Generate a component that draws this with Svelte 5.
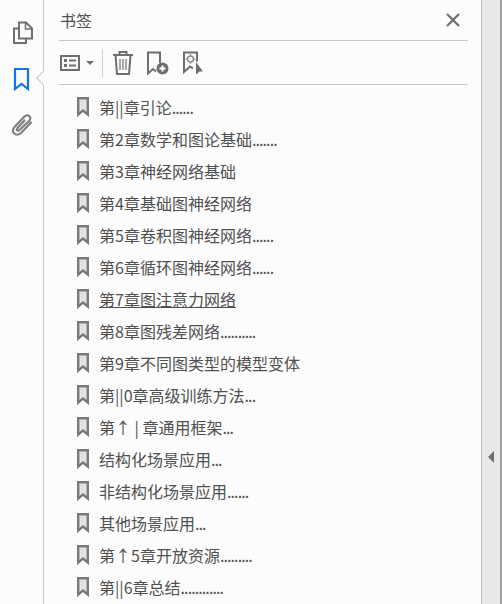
<script>
  let chapters = [
    { title: "第||章引论", dots: "......" },
    { title: "第2章数学和图论基础", dots: "......." },
    { title: "第3章神经网络基础" },
    { title: "第4章基础图神经网络" },
    { title: "第5章卷积图神经网络", dots: "......" },
    { title: "第6章循环图神经网络", dots: "......" },
    { title: "第7章图注意力网络", active: true },
    { title: "第8章图残差网络", dots: ".........." },
    { title: "第9章不同图类型的模型变体" },
    { title: "第||0章高级训练方法", dots: "..." },
    { title: "第↑ | 章通用框架", dots: "..." },
    { title: "结构化场景应用", dots: "..." },
    { title: "非结构化场景应用", dots: "......" },
    { title: "其他场景应用", dots: "..." },
    { title: "第↑5章开放资源", dots: "........." },
    { title: "第||6章总结", dots: "............" }
  ];
</script>

<div class="window">
  <nav class="rail">
    <button class="rail-btn" aria-label="页面">
      <svg width="24" height="24" viewBox="0 0 24 24" fill="none" stroke="#707070" stroke-width="2">
        <path d="M8 7.500H4V22h12v-4" />
        <path d="M9 1.500h7l6 6V17.500H9z" />
        <path d="M15.500 2V8H21.500" stroke-width="1.500" />
      </svg>
    </button>
    <button class="rail-btn selected" aria-label="书签">
      <svg width="24" height="24" viewBox="0 0 24 24" fill="none" stroke="#1473e6" stroke-width="2.200">
        <path d="M5 2h13v20l-6.500-5-6.500 5z" />
      </svg>
    </button>
    <button class="rail-btn" aria-label="附件">
      <svg width="24" height="24" viewBox="0 0 24 24" fill="none" stroke="#808080" stroke-width="2.200" stroke-linecap="round">
        <path d="M21 9.500l-10 10.500c-2 2-5 2-6.800.500s-1.700-4.500.300-6.500L14.500 3.500c1.500-1.500 3.800-1.500 5-.300s1 3.300-.500 4.800L9.500 17c-.8.800-1.800.800-2.300.300s-.5-1.500.300-2.300l7-7.500" />
      </svg>
    </button>
  </nav>

  <section class="panel">
    <header class="title-bar">
      <span class="title">书签</span>
      <svg class="close" width="14" height="14" viewBox="0 0 14 14" stroke="#6e6e6e" stroke-width="2.200">
        <path d="M1 1l12 12M13 1L1 13" />
      </svg>
    </header>

    <div class="toolbar">
      <div class="options">
        <svg width="20" height="18" viewBox="0 0 20 18" fill="none" stroke="#6e6e6e" stroke-width="2">
          <rect x="1" y="2" width="18" height="14" />
          <path d="M4 6.500h3M4 11.500h3" stroke-width="3" />
          <path d="M9 6.500h7M9 11.500h7" stroke-width="2" />
        </svg>
        <span class="caret"></span>
      </div>
      <span class="divider"></span>
      <svg class="tool trash" width="22" height="26" viewBox="0 0 22 26" fill="none" stroke="#6e6e6e" stroke-width="2">
        <path d="M1 5h20M7.500 5V2h7v3" />
        <path d="M3.500 5l1.500 19h12l1.500-19" />
        <path d="M8 9v11M11 9v11M14 9v11" stroke-width="1.500" stroke="#8a8a8a" />
      </svg>
      <svg class="tool add" width="23" height="24" viewBox="0 0 23 24" fill="none">
        <path d="M10 20.500l-3-2.500-5 4.500V1.500h12V12" stroke="#6e6e6e" stroke-width="2" />
        <circle cx="16.500" cy="17.500" r="6" fill="#6e6e6e" />
        <path d="M13.500 17.500h6M16.500 14.500v6" stroke="#fff" stroke-width="2" />
      </svg>
      <svg class="tool mark" width="21" height="24" viewBox="0 0 21 24" fill="none">
        <path d="M11 17.500l-3-2-6 5.500V1.500h13v9" stroke="#6e6e6e" stroke-width="2" />
        <circle cx="8.500" cy="8" r="3" stroke="#8a8a8a" stroke-width="1.500" />
        <path d="M8.500 3v1.500M8.500 11.500V13M3.500 8H5M12 8h1.500" stroke="#8a8a8a" stroke-width="1.200" />
        <path d="M14 11l7 9.500h-3.500l-3.500 3z" fill="#6e6e6e" />
      </svg>
    </div>

    <ul class="bookmarks">
      {#each chapters as chapter}
        <li>
          <svg width="12" height="20" viewBox="0 0 12 20">
            <path d="M1.200 1.200h9.600v16.300l-4.800-4-4.800 4z" fill="#e2e2e2" stroke="#7a7a7a" stroke-width="2.400" />
          </svg>
          <span class:active={chapter.active}>{chapter.title}<span class="dots">{chapter.dots}</span></span>
        </li>
      {/each}
    </ul>
  </section>

  <aside class="gutter">
    <span class="collapse"></span>
  </aside>
</div>

<style>
  :global(body) {
    margin: 0;
  }

  .window {
    display: flex;
    width: 502px;
    height: 604px;
    overflow: hidden;
    background-color: #fcfcfc;
    font-family: "Noto Sans CJK SC", "Liberation Sans", sans-serif;
    color: #505050;
  }

  .rail {
    position: relative;
    display: flex;
    flex-direction: column;
    align-items: center;
    gap: 22px;
    flex-shrink: 0;
    box-sizing: border-box;
    width: 44px;
    padding-top: 21px;
    border-right: 1px solid #c8c8c8;
  }

  .rail-btn {
    display: flex;
    width: 24px;
    height: 24px;
    padding: 0;
    border: none;
    background: none;
  }

  /* little notch pointing at the open panel */
  .selected::after {
    content: "";
    position: absolute;
    top: 73px;
    right: -5px;
    width: 10px;
    height: 10px;
    box-sizing: border-box;
    border-left: 1px solid #c8c8c8;
    border-bottom: 1px solid #c8c8c8;
    background-color: #fcfcfc;
    transform: rotate(45deg);
  }

  .panel {
    flex-grow: 1;
    min-width: 0;
    padding: 0 13px 0 15px;
  }

  .title-bar {
    display: flex;
    align-items: center;
    justify-content: space-between;
    box-sizing: border-box;
    height: 41px;
    padding: 0 8px 1px 1px;
    border-bottom: 1px solid #c8c8c8;
  }

  .title {
    font-size: 16px;
  }

  .toolbar {
    display: flex;
    align-items: center;
    box-sizing: border-box;
    height: 44px;
    padding-left: 1px;
    border-bottom: 1px solid #c8c8c8;
  }

  .options {
    display: flex;
    align-items: center;
    gap: 6px;
  }

  .caret {
    width: 0;
    height: 0;
    margin-top: 1px;
    border-left: 4px solid transparent;
    border-right: 4px solid transparent;
    border-top: 4px solid #6e6e6e;
  }

  .divider {
    width: 1px;
    height: 28px;
    margin: 0 9px 0 8px;
    background-color: #d0d0d0;
  }

  .tool {
    flex-shrink: 0;
  }

  .add {
    margin-left: 12px;
  }

  .mark {
    margin-left: 13px;
  }

  .bookmarks {
    margin: 0;
    padding: 6px 0 0 18px;
    list-style: none;
  }

  .bookmarks li {
    display: flex;
    align-items: center;
    gap: 10px;
    height: 32px;
    font-size: 16px;
    white-space: nowrap;
  }

  .dots {
    letter-spacing: -0.9px;
  }

  .active {
    text-decoration: underline;
  }

  .gutter {
    display: flex;
    flex-shrink: 0;
    box-sizing: border-box;
    width: 21px;
    padding-top: 451px;
    padding-right: 6px;
    justify-content: flex-end;
    border-left: 1px solid #c0c0c0;
    border-right: 2px solid #a0a0a0;
    background-color: #e8e8e8;
  }

  .collapse {
    width: 0;
    height: 0;
    border-top: 6px solid transparent;
    border-bottom: 6px solid transparent;
    border-right: 6px solid #6e6e6e;
  }
</style>
